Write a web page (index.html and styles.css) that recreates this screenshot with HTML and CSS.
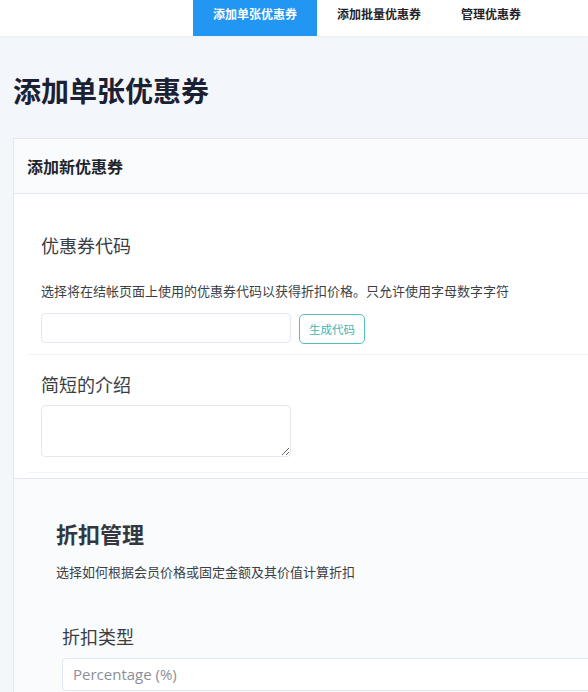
FILE: index.html
```html
<!DOCTYPE html>
<html lang="zh">

<head>
  <meta charset="UTF-8">
  <meta name="viewport" content="width=device-width, initial-scale=1.0">
  <title>添加单张优惠券</title>
  <link rel="stylesheet" href="styles.css">
</head>

<body>
  <div class="top-nav">
    <ul class="tabs">
      <li class="active">添加单张优惠券</li>
      <li>添加批量优惠券</li>
      <li>管理优惠券</li>
    </ul>
  </div>

  <div class="main">
    <h1 class="page-title">添加单张优惠券</h1>

    <div class="card">
      <div class="card-head">添加新优惠券</div>
      <div class="card-body">
        <div class="form-row first">
          <label class="field-label">优惠券代码</label>
          <p class="field-desc">选择将在结帐页面上使用的优惠券代码以获得折扣价格。只允许使用字母数字字符</p>
          <div class="code-line">
            <input type="text" class="text-input">
            <button class="gen-btn">生成代码</button>
          </div>
        </div>
        <div class="form-row second">
          <label class="field-label">简短的介绍</label>
          <textarea class="text-area"></textarea>
        </div>
      </div>
    </div>

    <div class="card discount">
      <h2 class="sec-title">折扣管理</h2>
      <p class="field-desc">选择如何根据会员价格或固定金额及其价值计算折扣</p>
      <div class="type-group">
        <label class="field-label">折扣类型</label>
        <div class="select-box">Percentage (%)</div>
      </div>
    </div>
  </div>
</body>

</html>
```

FILE: styles.css
```css
* {
  margin: 0;
  padding: 0;
  box-sizing: border-box;
}

li {
  list-style: none;
}

html,
body {
  overflow: hidden;
}

body {
  background-color: #f3f6fb;
  font-family: "Noto Sans CJK SC", "Noto Sans", sans-serif;
  color: #3a3d44;
}

.top-nav {
  height: 36px;
  background-color: #fff;
  box-shadow: 0 1px 2px rgba(20, 40, 80, 0.04);
}

.tabs {
  display: flex;
  padding-left: 193px;
}

.tabs li {
  height: 36px;
  padding: 4px 20px 0;
  line-height: 20px;
  font-size: 12px;
  font-weight: bold;
  color: #1f232b;
}

.tabs .active {
  background-color: #2196f3;
  color: #fff;
}

.main {
  padding-left: 13px;
  width: 900px;
}

.page-title {
  margin-top: 36px;
  margin-bottom: 30px;
  font-size: 28px;
  line-height: 36px;
  color: #1c2033;
}

.card {
  border: 1px solid #e3e8ef;
  background-color: #fff;
}

.card-head {
  height: 55px;
  padding: 0 13px;
  display: flex;
  align-items: center;
  background-color: #f9fbfd;
  border-bottom: 1px solid #e3e8ef;
  font-size: 16px;
  font-weight: bold;
  color: #1f232b;
}

.card-body {
  padding: 0 0 5px 14px;
}

.form-row {
  padding-left: 13px;
  border-bottom: 1px solid #f0f2f6;
}

.form-row.first {
  padding-top: 38px;
  padding-bottom: 10px;
}

.form-row.second {
  padding-top: 16px;
  padding-bottom: 15px;
}

.field-label {
  display: block;
  font-size: 18px;
  line-height: 27px;
  color: #3a3d44;
}

.field-desc {
  margin-top: 22px;
  font-size: 13px;
  line-height: 20px;
  color: #3c3f46;
}

.code-line {
  display: flex;
  align-items: flex-start;
  gap: 8px;
  margin-top: 12px;
}

.text-input {
  width: 250px;
  height: 30px;
  border: 1px solid #e3e8f1;
  border-radius: 4px;
  background: #fff;
}

.gen-btn {
  height: 30px;
  padding: 0 9px;
  margin-top: 1px;
  border: 1px solid #52bdbd;
  border-radius: 5px;
  background: #fff;
  color: #3fb6b2;
  font-family: "Noto Sans CJK SC", sans-serif;
  font-size: 11.5px;
}

.text-area {
  display: block;
  width: 250px;
  height: 52px;
  margin-top: 7px;
  border: 1px solid #e3e8f1;
  border-radius: 4px;
  background: #fff;
  resize: vertical;
}

.card.discount {
  border-top: 0;
  background-color: #f9fbfd;
  padding: 39px 0 40px 42px;
}

.sec-title {
  font-size: 22px;
  line-height: 30px;
  color: #34373d;
}

.discount .field-desc {
  margin-top: 14px;
}

.type-group {
  margin-top: 41px;
  padding-left: 6px;
}

.select-box {
  height: 33px;
  margin-top: 8px;
  padding: 0 10px;
  border: 1px solid #dfe7f1;
  border-radius: 4px;
  background-color: #fff;
  font-family: "Open Sans", sans-serif;
  font-size: 15px;
  line-height: 31px;
  color: #8a8f99;
}
```
